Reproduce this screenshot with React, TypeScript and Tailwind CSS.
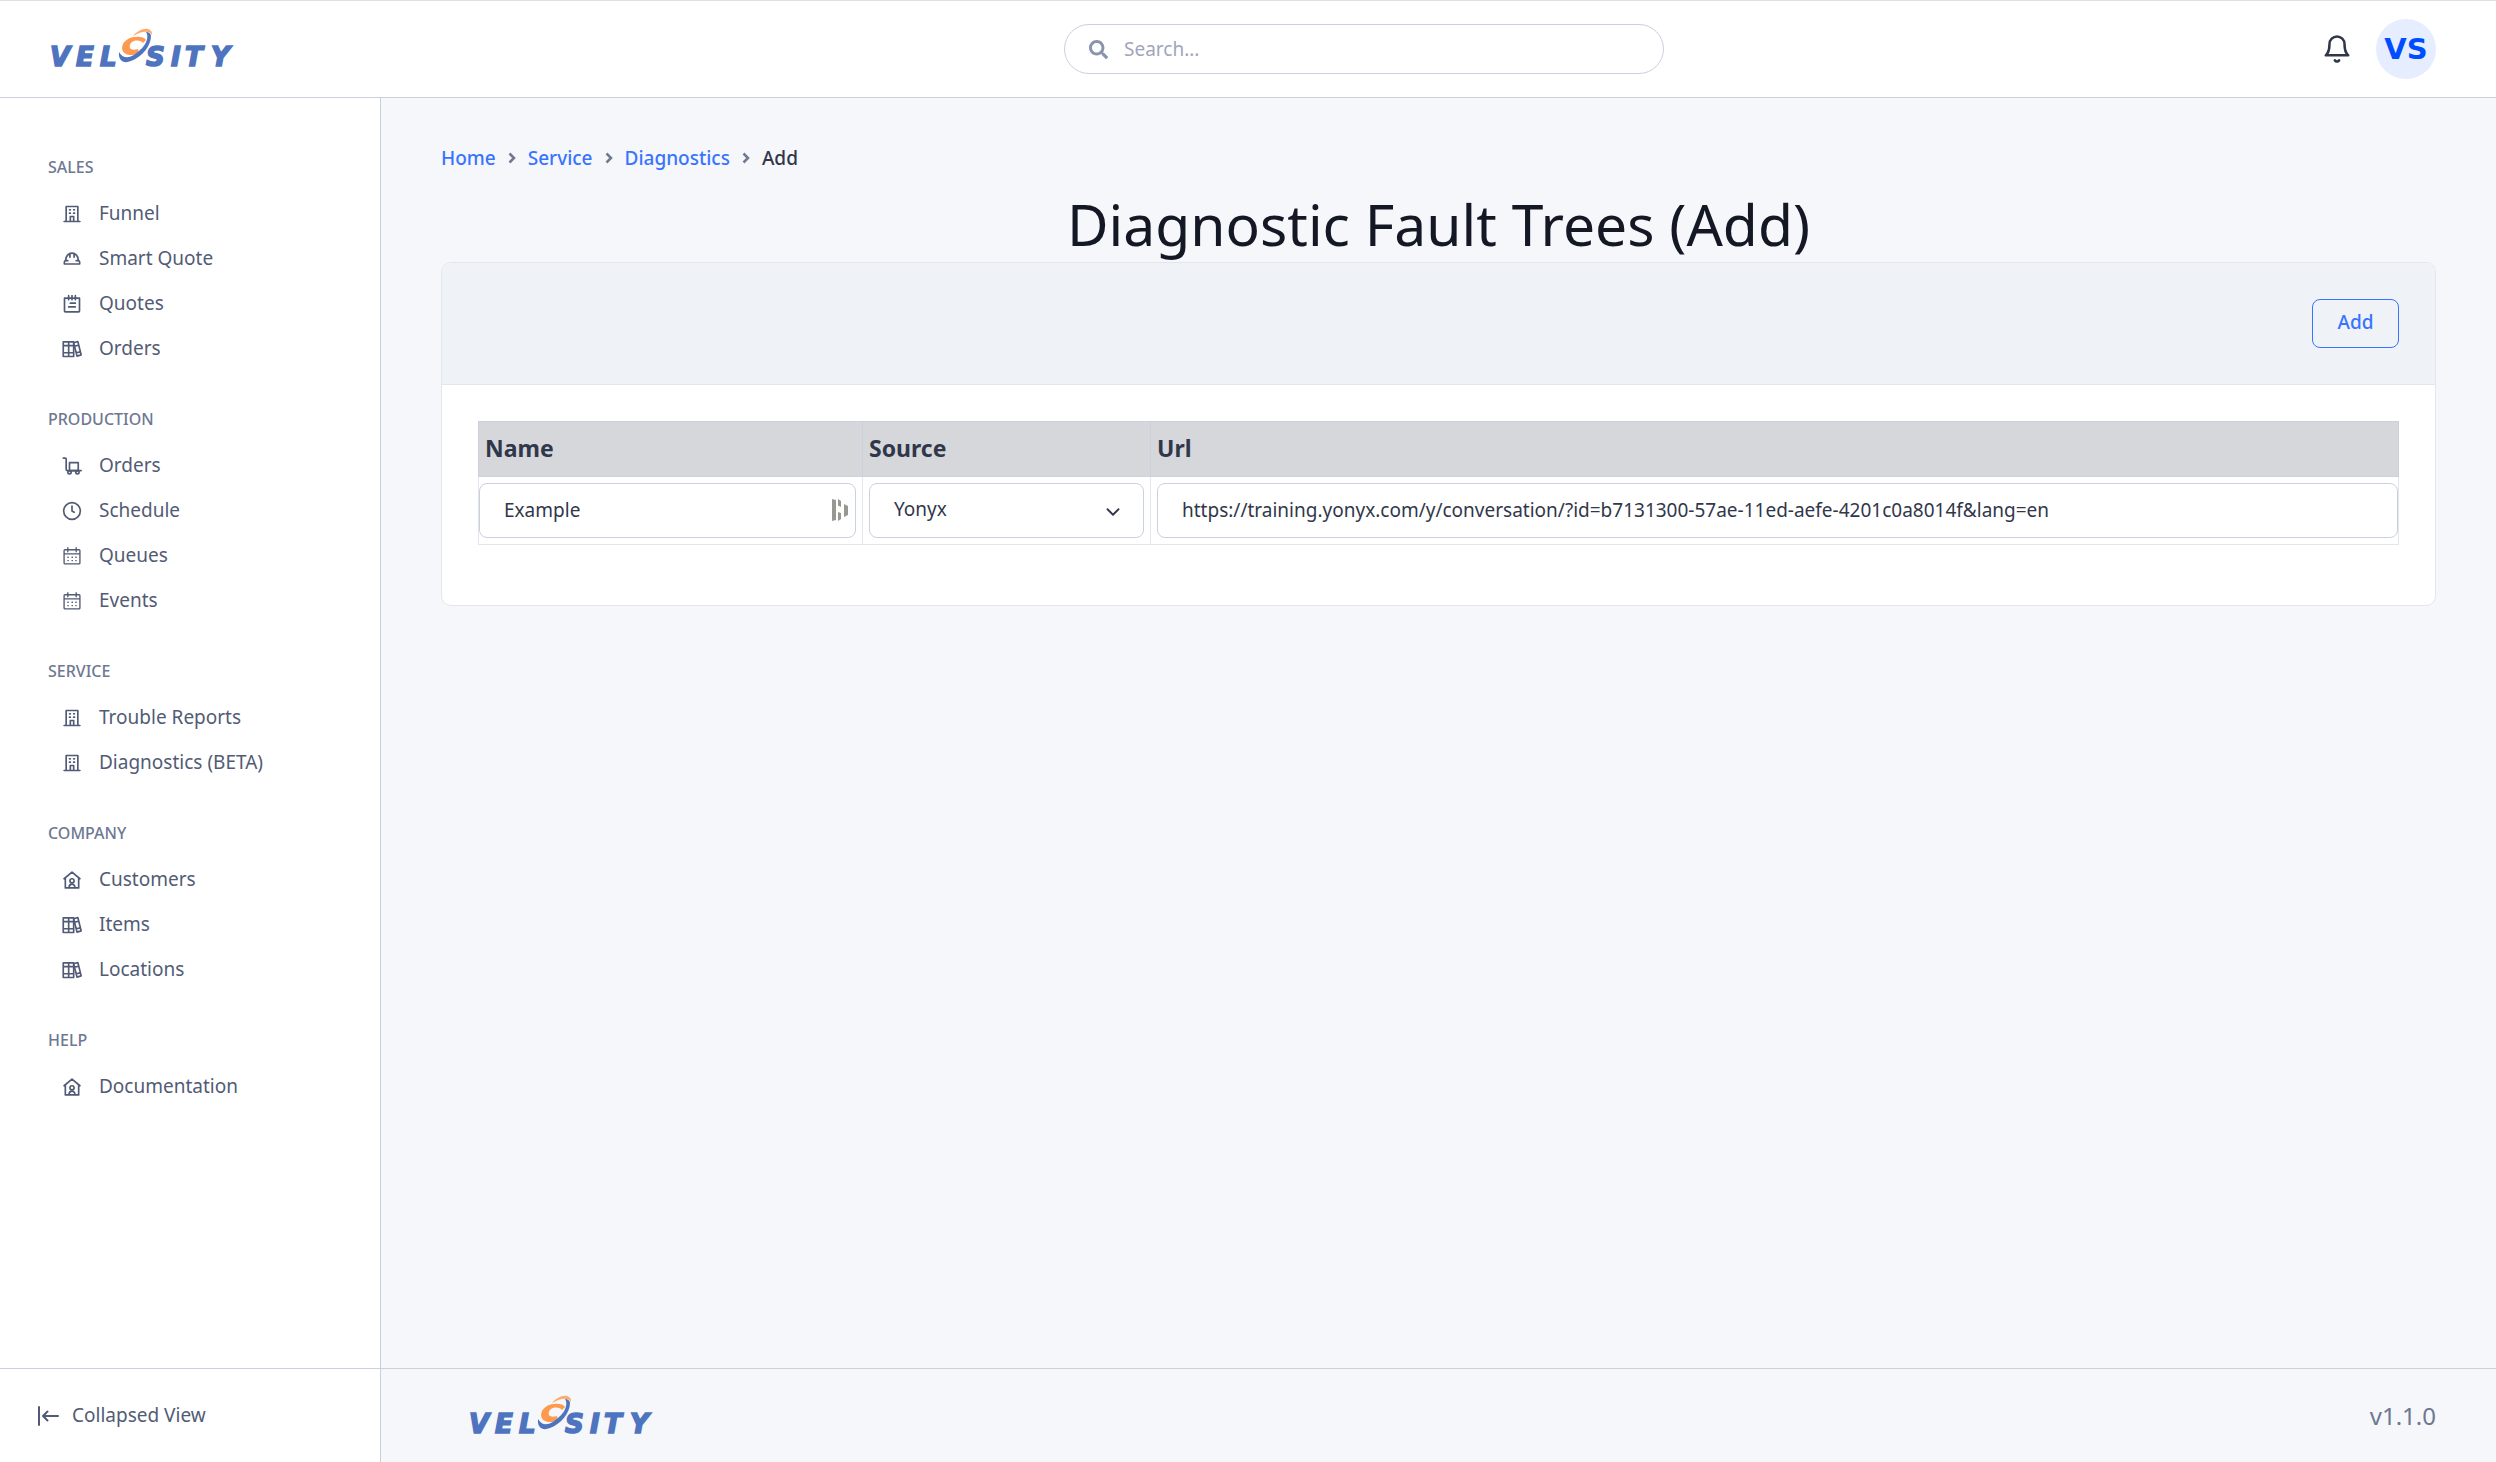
import { useState } from "react";
import type { ReactNode } from "react";
import { FaSearch } from "react-icons/fa";
import { FiBell, FiChevronDown } from "react-icons/fi";

type IconName = "building" | "hardHat" | "notes" | "books" | "cart" | "clock" | "calendar" | "house";

type NavSection = {
  title: string;
  items: { label: string; icon: IconName }[];
};

const sections: NavSection[] = [
  {
    title: "SALES",
    items: [
      { label: "Funnel", icon: "building" },
      { label: "Smart Quote", icon: "hardHat" },
      { label: "Quotes", icon: "notes" },
      { label: "Orders", icon: "books" },
    ],
  },
  {
    title: "PRODUCTION",
    items: [
      { label: "Orders", icon: "cart" },
      { label: "Schedule", icon: "clock" },
      { label: "Queues", icon: "calendar" },
      { label: "Events", icon: "calendar" },
    ],
  },
  {
    title: "SERVICE",
    items: [
      { label: "Trouble Reports", icon: "building" },
      { label: "Diagnostics (BETA)", icon: "building" },
    ],
  },
  {
    title: "COMPANY",
    items: [
      { label: "Customers", icon: "house" },
      { label: "Items", icon: "books" },
      { label: "Locations", icon: "books" },
    ],
  },
  {
    title: "HELP",
    items: [{ label: "Documentation", icon: "house" }],
  },
];

const crumbs = ["Home", "Service", "Diagnostics"];

const iconShapes: Record<IconName, ReactNode> = {
  building: (
    <>
      <path d="M2.5 21h19M5 21V3h14v18M10 21v-6h4v6" />
      <path d="M9 7h1M14 7h1M9 11h1M14 11h1" />
    </>
  ),
  hardHat: (
    <>
      <path d="M4.500 13a7.500 8 0 0 1 15 0l1.700 2.500v2.500H2.800v-2.500zM4 14h3M17 14h3" />
      <path d="M9.500 6v4M14.500 6v4" />
    </>
  ),
  notes: (
    <>
      <path d="M3 5h18v15.500a1 1 0 0 1-1 1H4a1 1 0 0 1-1-1z" />
      <path d="M8 2v5M12 2v5M16 2v5M10 11h6M8 15.500h8" />
    </>
  ),
  books: (
    <>
      <path d="M1.500 3.500h6.500v17.500H1.500zM8 3.500h6v17.500H8zM1.500 8h12.500M1.500 16.500h12.500" />
      <path d="M14 4.500l5-1.500 4 16-5 1.500zM15 8.500l5-1M17 16.500l5-1" />
    </>
  ),
  cart: (
    <>
      <path d="M1.500 2.500h2.500a1 1 0 0 1 1 1v12a2 2 0 0 0 2 2H23" />
      <path d="M9 8h10.500v9.500H9z" />
      <circle cx="9" cy="19.500" r="2" />
      <circle cx="18.500" cy="19.500" r="2" />
    </>
  ),
  clock: (
    <>
      <circle cx="12" cy="12" r="10" />
      <path d="M12 6v6l2.600 1.500" />
    </>
  ),
  calendar: (
    <>
      <path d="M3.500 4.500h17a1 1 0 0 1 1 1v15a1 1 0 0 1-1 1h-17a1 1 0 0 1-1-1v-15a1 1 0 0 1 1-1zM2.500 9.500h19M7 2v5M17 2v5" />
      <path d="M7 13.500h.5M12 13.500h.5M16.500 13.500h.5M7 17.500h.5M12 17.500h.5M16.500 17.500h.5" />
    </>
  ),
  house: (
    <>
      <path d="M2.500 10.500L12 2.500l9.500 8M4 9.500v12h16v-12" />
      <circle cx="12" cy="13" r="2.500" />
      <path d="M8.500 21a3.500 4 0 0 1 7 0" />
    </>
  ),
};

function NavIcon({ name }: { name: IconName }) {
  return (
    <svg
      viewBox="0 0 24 24"
      className="size-5 shrink-0"
      fill="none"
      stroke="currentColor"
      strokeWidth={name === "calendar" ? 1.6 : 2}
      strokeLinecap="round"
      strokeLinejoin="round"
      aria-hidden="true"
    >
      {iconShapes[name]}
    </svg>
  );
}

function Logo() {
  return (
    <svg viewBox="0 0 190 44" className="h-11 w-[190px]" role="img" aria-label="Velosity">
      <g
        fill="#4f74bf"
        stroke="#4f74bf"
        strokeWidth="1.600"
        fontFamily="'DejaVu Sans', sans-serif"
        fontWeight="700"
        fontStyle="italic"
        fontSize="26"
      >
        <text x="2" y="39">V</text>
        <text x="28" y="39">E</text>
        <text x="52" y="39">L</text>
        <text x="98" y="39">S</text>
        <text x="123" y="39">I</text>
        <text x="137" y="39">T</text>
        <text x="163" y="39">Y</text>
      </g>
      <path
        d="M98 13c-2-4-13-4-18-1c-7 4-8 12-2 15c4 2 10 1 13-1l-1-4c-3 1-7 1-8-1c-1-3 1-6 4-7c4-1 8 0 9 2z"
        fill="#fd9a4f"
      />
      <path d="M71 25c-1 9 5 12 12 9c11-4 20-15 20-25c0-2-2-4-5-4c3 4 1 12-6 18c-7 7-16 11-21 2z" fill="#4f74bf" />
      <path d="M85 9c5-6 13-9 17-6c2 1 2 3 2 5c-3-5-10-4-19 1z" fill="#fdab6c" />
    </svg>
  );
}

export default function App() {
  const [name, setName] = useState("Example");
  const [source, setSource] = useState("Yonyx");
  const [url, setUrl] = useState(
    "https://training.yonyx.com/y/conversation/?id=b7131300-57ae-11ed-aefe-4201c0a8014f&lang=en"
  );

  const field =
    "block h-[55px] w-full rounded-lg border border-[#cbd0dd] bg-white px-6 pb-[2px] text-[19px] text-[#31374a] outline-none";

  return (
    <div className="flex min-h-screen flex-col bg-[#f5f7fa] font-['Noto_Sans',sans-serif] text-[19px] text-[#525b75]">
      {/* Top bar */}
      <header className="flex h-[98px] items-center justify-between border-t border-b border-t-[#dfe0e3] border-b-[#cbd0dd] bg-white pr-15">
        <a href="#" className="w-[406px] pl-12">
          <Logo />
        </a>
        <label className="flex h-[50px] w-[600px] items-center gap-4 rounded-full border border-[#cbd0dd] px-6">
          <FaSearch className="size-[19px] text-[#8a94ad]" />
          <input
            type="search"
            aria-label="Search"
            placeholder="Search..."
            className="min-w-0 flex-1 bg-transparent outline-none placeholder:text-[#9fa6bc]"
          />
        </label>
        <div className="flex items-center gap-6">
          <button aria-label="Notifications" className="text-[#31374a]">
            <FiBell className="size-[30px]" />
          </button>
          <button className="size-15 rounded-full bg-[#e5edff] pt-[2px] font-['DejaVu_Sans',sans-serif] text-[29px] font-bold text-[#004dff]">
            VS
          </button>
        </div>
      </header>

      <div className="flex flex-1">
        {/* Sidebar */}
        <aside className="flex w-[381px] shrink-0 flex-col border-r border-[#cbd0dd] bg-white">
          <nav className="flex flex-1 flex-col gap-[34px] px-12 pt-[55px]">
            {sections.map((section) => (
              <section key={section.title}>
                <h2 className="mb-[10px] text-[16px] leading-7 font-medium text-[#6e7891]">{section.title}</h2>
                <ul>
                  {section.items.map((item) => (
                    <li key={item.label}>
                      <a href="#" className="flex h-[45px] items-center gap-[17px] pl-[14px]">
                        <NavIcon name={item.icon} />
                        {item.label}
                      </a>
                    </li>
                  ))}
                </ul>
              </section>
            ))}
          </nav>
          <div className="flex h-[94px] items-center border-t border-[#cbd0dd] px-9">
            <button className="flex items-center gap-3">
              <svg viewBox="0 0 24 24" className="size-6" fill="none" stroke="currentColor" strokeWidth="2" strokeLinecap="round" strokeLinejoin="round" aria-hidden="true">
                <path d="M3 3v18M22 12H7M11.500 7.500L7 12l4.500 4.500" />
              </svg>
              Collapsed View
            </button>
          </div>
        </aside>

        <div className="flex min-w-0 flex-1 flex-col">
          <main className="flex-1 px-15 pt-11">
            {/* Breadcrumb */}
            <nav aria-label="Breadcrumb">
              <ol className="flex h-8 items-center font-medium text-[#31374a]">
                {crumbs.map((crumb) => (
                  <li key={crumb} className="flex items-center">
                    <a href="#" className="text-[#3874ff]">{crumb}</a>
                    <svg viewBox="0 0 8 12" className="mx-3 h-3 w-2" fill="none" stroke="#6e7891" strokeWidth="2.500" aria-hidden="true">
                      <path d="M1.500 1.500L6 6l-4.500 4.500" />
                    </svg>
                  </li>
                ))}
                <li>Add</li>
              </ol>
            </nav>

            <h1 className="mt-[14px] mb-[2px] text-center text-[57px] leading-[72px] text-[#141824]">Diagnostic Fault Trees (Add)</h1>

            <div className="overflow-hidden rounded-[10px] border border-[#e3e6ed] bg-white">
              <div className="flex justify-end border-b border-[#e3e6ed] bg-[#eff2f6] p-9">
                <button className="h-[49px] w-[87px] rounded-lg border border-[#3874ff] pb-[2px] font-medium text-[#3874ff]">Add</button>
              </div>
              <div className="px-9 pt-9 pb-15">
                <table className="w-full table-fixed border-collapse">
                  <colgroup>
                    <col className="w-[384px]" />
                    <col className="w-[288px]" />
                    <col />
                  </colgroup>
                  <thead>
                    <tr className="h-[55px] bg-[#d5d7db] text-left text-[23px] text-[#31374a]">
                      <th className="border border-[#cbd0dd] px-[6px] pb-[2px]">Name</th>
                      <th className="border border-[#cbd0dd] px-[6px] pb-[2px]">Source</th>
                      <th className="border border-[#cbd0dd] px-[6px] pb-[2px]">Url</th>
                    </tr>
                  </thead>
                  <tbody>
                    <tr>
                      <td className="border border-[#e3e6ed] py-[6px] pr-[6px]">
                        <div className="relative">
                          <input aria-label="Name" value={name} onChange={(e) => setName(e.target.value)} className={field} />
                          <svg viewBox="0 0 16 22" className="absolute top-4 right-2 h-[22px] w-4" fill="#999791" aria-hidden="true">
                            <path d="M0 0l4 1v20l-4 1zM6 0l3 2v6l-3-1.500zM6 22l3-2v-6l-3-1zM12 5l4 2v9l-4 2z" />
                          </svg>
                        </div>
                      </td>
                      <td className="border border-[#e3e6ed] px-[6px] py-[6px]">
                        <div className="relative">
                          <select aria-label="Source" value={source} onChange={(e) => setSource(e.target.value)} className={`${field} appearance-none`}>
                            <option>Yonyx</option>
                          </select>
                          <FiChevronDown className="pointer-events-none absolute top-[18px] right-5 size-[22px] text-[#31374a]" />
                        </div>
                      </td>
                      <td className="border border-[#e3e6ed] py-[6px] pl-[6px]">
                        <input aria-label="Url" value={url} onChange={(e) => setUrl(e.target.value)} className={field} />
                      </td>
                    </tr>
                  </tbody>
                </table>
              </div>
            </div>
          </main>

          <footer className="flex h-[94px] items-center justify-between border-t border-[#cbd0dd] pr-15 pl-[86px]">
            <Logo />
            <span className="text-[24px] text-[#6e7891]">v1.1.0</span>
          </footer>
        </div>
      </div>
    </div>
  );
}
